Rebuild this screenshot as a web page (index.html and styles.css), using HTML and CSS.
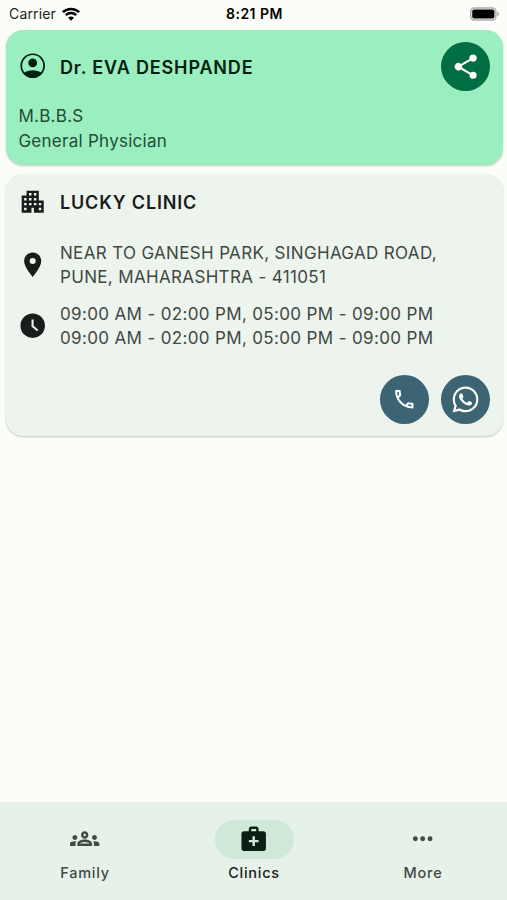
FILE: index.html
```
<!DOCTYPE html>
<html lang="en">
<head>
<meta charset="utf-8">
<meta name="viewport" content="width=device-width, initial-scale=1">
<title>Clinics</title>
<link rel="stylesheet" href="styles.css">
</head>
<body>
<div class="app">
  <header class="status">
    <div class="carrier"><span>Carrier</span>
      <svg class="wifi" viewBox="0 0 18 14" fill="none" stroke="#000" stroke-width="2.5"><path d="M.9 5.2a11.6 11.6 0 0 1 16.2 0M3.8 8.2a7.5 7.5 0 0 1 10.4 0"/><path d="M9 13.7 6.1 10.8a4.2 4.2 0 0 1 5.8 0z" fill="#000" stroke="none"/></svg>
    </div>
    <div class="time">8:21 PM</div>
    <div class="power"><svg class="battery" viewBox="0 0 31 14"><rect x=".75" y=".75" width="26" height="12.5" rx="3.6" fill="#fbfdf8" stroke="#aaa" stroke-width="1.5"/><rect x="2.3" y="2.3" width="22.9" height="9.4" rx="2" fill="#000"/><path d="M28.2 4.6q2 .8 2 2.4t-2 2.4z" fill="#aaa"/></svg></div>
  </header>
  <main class="content">
    <section class="card doctor">
      <div class="row head">
        <svg class="icon" viewBox="0 0 24 24"><circle cx="12" cy="12" r="9.35" fill="none" stroke="currentColor" stroke-width="1.4"/><circle cx="12" cy="9.700" r="3.6" fill="currentColor"/><path d="M4.600 18C6.800 16.400 9.300 15.700 12 15.700s5.200.7 7.400 2.300C17.600 20.400 14.900 21.600 12 21.600s-5.600-1.200-7.400-3.600z" fill="currentColor"/></svg>
        <h1 class="title">Dr. EVA DESHPANDE</h1>
        <button class="fab share" aria-label="Share"><svg class="icon" viewBox="0 0 24 24" fill="currentColor"><path d="M18 16.08c-.76 0-1.44.3-1.96.77L8.910 12.700c.05-.23.09-.46.09-.7s-.04-.47-.09-.7l7.050-4.110c.54.5 1.250.81 2.040.81a3 3 0 1 0-3-3c0 .24.04.47.09.7L8.040 9.810A3 3 0 1 0 8.040 14.190l7.120 4.160c-.05.21-.08.43-.08.65a2.920 2.920 0 1 0 2.920-2.920z"/></svg></button>
      </div>
      <div class="degree">M.B.B.S<br>General Physician</div>
    </section>
    <section class="card clinic">
      <div class="row name">
        <svg class="icon" viewBox="0 0 24 24" fill="currentColor"><path d="M17 11V3H7v4H3v14h8v-4h2v4h8V11h-4zM7 19H5v-2h2v2zm0-4H5v-2h2v2zm0-4H5V9h2v2zm4 4H9v-2h2v2zm0-4H9V9h2v2zm0-4H9V5h2v2zm4 8h-2v-2h2v2zm0-4h-2V9h2v2zm0-4h-2V5h2v2zm4 12h-2v-2h2v2zm0-4h-2v-2h2v2z"/></svg>
        <h2 class="title">LUCKY CLINIC</h2>
      </div>
      <div class="row address">
        <svg class="icon" viewBox="0 0 24 24" fill="currentColor"><path d="M12 2C8.130 2 5 5.130 5 9c0 5.250 7 13 7 13s7-7.750 7-13c0-3.870-3.130-7-7-7zm0 9.500a2.500 2.500 0 1 1 0-5 2.500 2.500 0 0 1 0 5z"/></svg>
        <p class="lines addr">NEAR TO GANESH PARK, SINGHAGAD ROAD,<br>PUNE, MAHARASHTRA - 411051</p>
      </div>
      <div class="row hours">
        <svg class="icon" viewBox="0 0 24 24"><circle cx="12" cy="12" r="10" fill="currentColor"/><path d="M11.900 7v5.400l4.200 3.500" fill="none" stroke="#edf4ee" stroke-width="1.700"/></svg>
        <p class="lines slots">09:00 AM - 02:00 PM, 05:00 PM - 09:00 PM<br>09:00 AM - 02:00 PM, 05:00 PM - 09:00 PM</p>
      </div>
      <div class="actions">
        <button class="fab contact" aria-label="Call"><svg class="phone" viewBox="0 0 24 24" fill="currentColor"><path d="M20,15.500C18.800,15.500 17.500,15.300 16.400,14.900C16.300,14.900 16.200,14.900 16.100,14.900C15.800,14.900 15.600,15 15.400,15.200L13.200,17.400C10.400,15.900 8,13.600 6.600,10.800L8.800,8.600C9.100,8.300 9.200,7.900 9,7.600C8.700,6.500 8.500,5.200 8.500,4C8.500,3.500 8,3 7.500,3H4C3.500,3 3,3.500 3,4C3,13.400 10.600,21 20,21C20.500,21 21,20.500 21,20V16.500C21,16 20.500,15.500 20,15.500M5,5H6.500C6.600,5.900 6.800,6.800 7,7.600L5.800,8.800C5.400,7.600 5.100,6.300 5,5M19,19C17.700,18.900 16.400,18.600 15.200,18.200L16.400,17C17.200,17.200 18.100,17.400 19,17.400V19Z"/></svg></button>
        <button class="fab contact" aria-label="WhatsApp"><svg class="whatsapp" viewBox="0 0 24 24" fill="currentColor"><path d="M12.040 2C6.580 2 2.130 6.450 2.130 11.910C2.130 13.660 2.590 15.360 3.450 16.860L2.050 22L7.300 20.620C8.750 21.410 10.380 21.830 12.040 21.830C17.500 21.830 21.950 17.380 21.950 11.920C21.950 9.270 20.920 6.780 19.050 4.910C17.180 3.030 14.690 2 12.040 2M12.050 3.670C14.250 3.670 16.310 4.530 17.870 6.090C19.420 7.650 20.280 9.720 20.280 11.920C20.280 16.460 16.580 20.150 12.040 20.150C10.560 20.150 9.110 19.760 7.850 19L7.550 18.830L4.430 19.650L5.260 16.610L5.060 16.290C4.240 15 3.800 13.470 3.800 11.910C3.810 7.370 7.500 3.670 12.050 3.670"/><path d="M8.530 7.330C8.370 7.330 8.100 7.390 7.870 7.640C7.650 7.890 7 8.500 7 9.710C7 10.930 7.890 12.100 8 12.270C8.140 12.440 9.760 14.940 12.250 16C12.840 16.270 13.300 16.420 13.660 16.530C14.250 16.720 14.790 16.690 15.220 16.630C15.700 16.560 16.680 16.030 16.890 15.450C17.100 14.870 17.100 14.380 17.040 14.270C16.970 14.170 16.810 14.110 16.560 14C16.310 13.860 15.090 13.260 14.870 13.180C14.640 13.100 14.500 13.060 14.310 13.300C14.150 13.550 13.670 14.110 13.530 14.270C13.380 14.440 13.240 14.460 13 14.340C12.740 14.210 11.940 13.950 11 13.110C10.260 12.450 9.770 11.640 9.620 11.390C9.500 11.150 9.610 11 9.730 10.890C9.840 10.780 10 10.600 10.100 10.450C10.230 10.310 10.270 10.200 10.350 10.040C10.430 9.870 10.390 9.730 10.330 9.610C10.270 9.500 9.770 8.260 9.560 7.770C9.360 7.290 9.160 7.350 9 7.340C8.860 7.340 8.700 7.330 8.530 7.330Z"/></svg></button>
      </div>
    </section>
  </main>
  <nav class="tabs">
    <a class="tab"><span class="pill"><svg class="icon" viewBox="0 0 24 24" fill="currentColor"><path d="M4 13c1.100 0 2-.9 2-2s-.9-2-2-2-2 .9-2 2 .9 2 2 2zm1.130 1.100C4.760 14.040 4.390 14 4 14c-.99 0-1.930.21-2.780.58C.48 14.900 0 15.620 0 16.430V18h4.500v-1.610c0-.83.23-1.610.63-2.290zM20 13c1.100 0 2-.9 2-2s-.9-2-2-2-2 .9-2 2 .9 2 2 2zm4 3.430c0-.81-.48-1.530-1.220-1.850C21.930 14.210 20.990 14 20 14c-.39 0-.76.04-1.130.1.4.68.63 1.460.63 2.290V18H24v-1.570zM16.240 13.650c-1.170-.52-2.610-.9-4.240-.9s-3.070.39-4.240.9C6.680 14.130 6 15.210 6 16.390V18h12v-1.610c0-1.180-.68-2.260-1.760-2.740zM8.070 16c.09-.23.13-.39.91-.69.97-.38 1.990-.56 3.020-.56s2.050.18 3.020.56c.77.3.81.46.91.69H8.070zM12 8c.55 0 1 .45 1 1s-.45 1-1 1-1-.45-1-1 .45-1 1-1m0-2c-1.660 0-3 1.340-3 3s1.340 3 3 3 3-1.340 3-3-1.340-3-3-3z"/></svg></span><span>Family</span></a>
    <a class="tab active"><span class="pill"><svg class="icon" viewBox="0 0 24 24" fill="currentColor"><path d="M20 6h-4V4c0-1.100-.9-2-2-2h-4c-1.100 0-2 .9-2 2v2H4c-1.100 0-2 .9-2 2v12c0 1.100.9 2 2 2h16c1.100 0 2-.9 2-2V8c0-1.100-.9-2-2-2zM10 4h4v2h-4V4zm6 11h-3v3h-2v-3H8v-2h3v-3h2v3h3v2z"/></svg></span><span>Clinics</span></a>
    <a class="tab"><span class="pill"><svg class="icon" viewBox="0 0 24 24" fill="currentColor"><circle cx="6" cy="12" r="2"/><circle cx="12" cy="12" r="2"/><circle cx="18" cy="12" r="2"/></svg></span><span>More</span></a>
  </nav>
</div>
</body>
</html>
```
FILE: styles.css
```
* { box-sizing: border-box; }
body { margin: 0; background: #fbfdf8; color: #191c1a; font-family: Inter, "Liberation Sans", sans-serif; }
h1, h2, p { margin: 0; }
svg { display: block; flex: none; }
.app { height: 900px; display: flex; flex-direction: column; }
.status { height: 30px; padding: 0 7px 3px 9px; display: grid; grid-template-columns: 1fr auto 1fr; align-items: center; font-size: 14px; color: #222; }
.carrier { display: flex; align-items: center; gap: 6px; letter-spacing: 0.15px; }
.wifi { width: 18px; height: 14px; }
.time { font-weight: 600; color: #000; letter-spacing: .5px; }
.power { display: flex; justify-content: flex-end; }
.battery { width: 30px; height: 14px; }
.content { flex: 1; padding: 0 4.5px 0 5.5px; }
.card { border-radius: 17px; box-shadow: 0 1px 2px rgba(0,0,0,.22); }
.doctor { height: 135px; padding: 12.4px 12.6px 0 12.9px; background: #9beebf; color: #002110; }
.clinic { height: 262px; margin-top: 9px; padding: 12.8px 12.6px 0 12.9px; background: #edf4ee; }
.row { display: flex; align-items: center; gap: 12.2px; }
.icon { width: 29.4px; height: 29.4px; }
.title { font-size: 18px; font-weight: 600; line-height: 30px; letter-spacing: .85px; padding-top: 2.5px; }
.head { height: 49px; }
.head > .icon { margin-top: -3px; }
.head .title { flex: 1; }
.fab { width: 49px; height: 49px; padding: 0; border: 0; border-radius: 50%; display: flex; align-items: center; justify-content: center; color: #fff; }
.share { background: #006d43; }
.contact { background: #3c6472; }
.degree { margin-top: 12.8px; font-size: 17px; line-height: 24.5px; letter-spacing: .27px; color: #224d36; }
.name { height: 30px; }
.address { margin-top: 22.2px; }
.hours { margin-top: 10px; }
.lines { font-size: 17px; line-height: 24.5px; letter-spacing: .35px; color: #404943; white-space: nowrap; padding-top: 2px; }
.addr { letter-spacing: .34px; }
.actions { display: flex; justify-content: flex-end; gap: 12px; margin-top: 24px; }
.phone { width: 24.5px; height: 24.5px; }
.whatsapp { width: 31px; height: 31px; }
.tabs { height: 98px; padding-top: 17.5px; display: grid; grid-template-columns: repeat(3, 1fr); background: #e6f1e9; color: #404943; }
.tab { display: flex; flex-direction: column; align-items: center; gap: 4.5px; padding-left: 1px; font-size: 14.5px; font-weight: 500; line-height: 20px; letter-spacing: .75px; }
.pill { width: 79px; height: 39px; border-radius: 20px; display: flex; align-items: center; justify-content: center; }
.active { color: #191c1a; }
.active .pill { background: #d0e8d8; color: #0b1f14; }
```
